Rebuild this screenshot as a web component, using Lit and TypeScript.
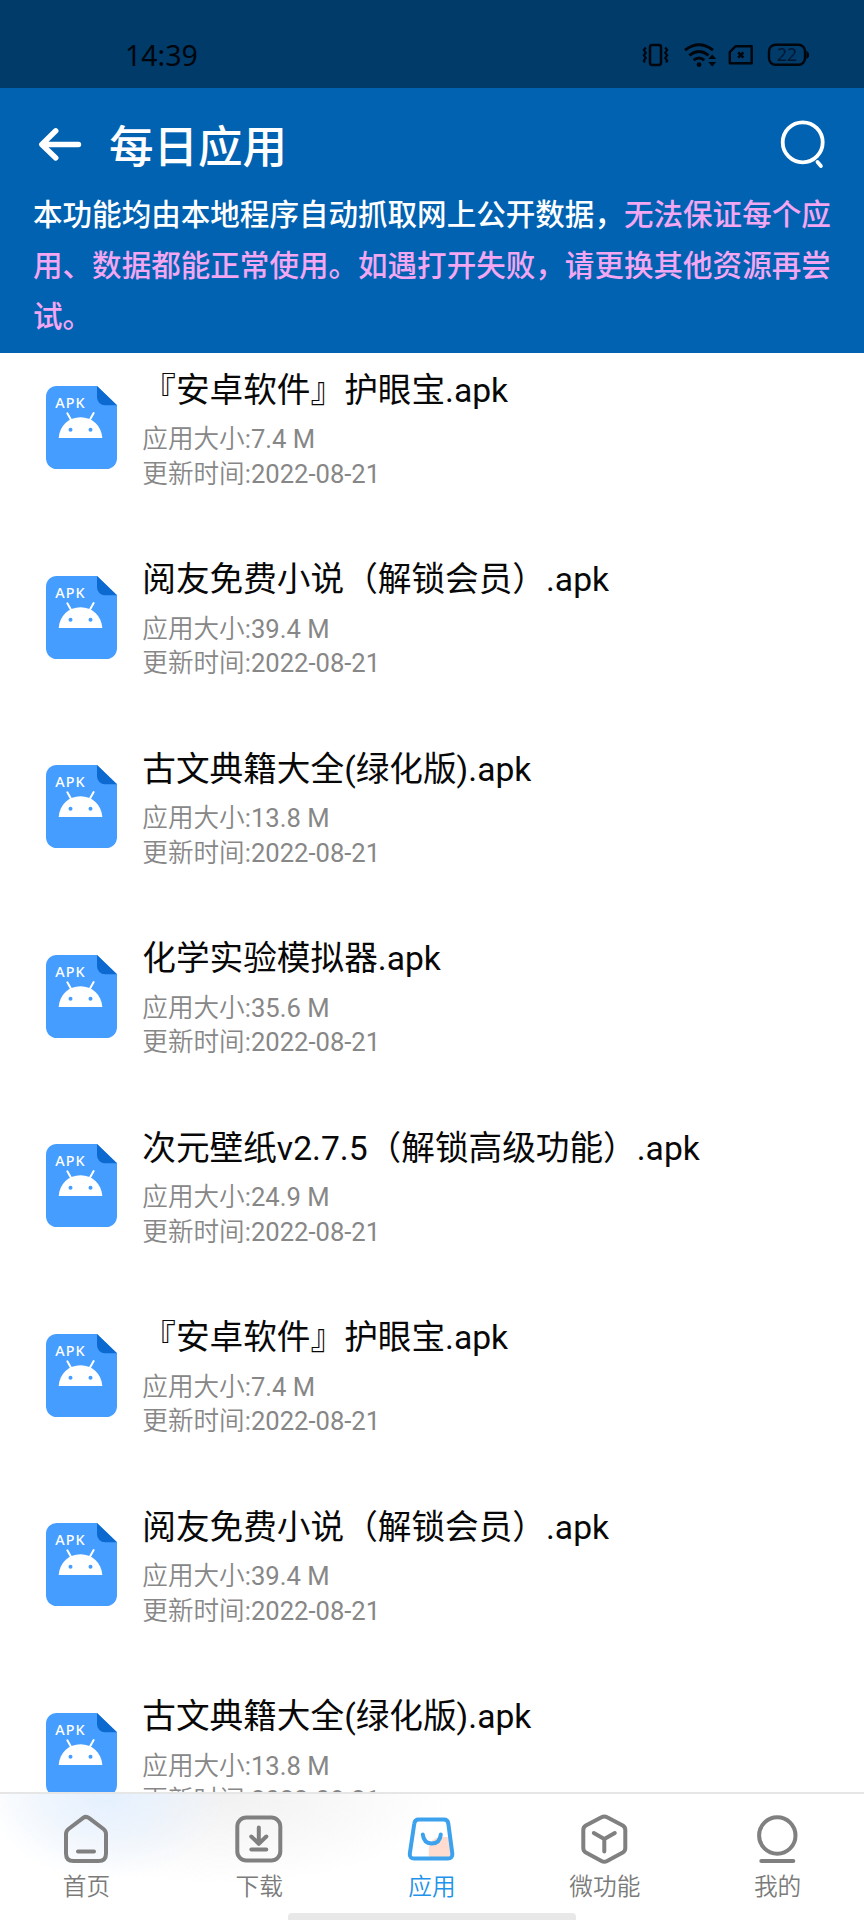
import { LitElement, html, css, svg } from "lit";
import { customElement, property } from "lit/decorators.js";

interface AppFile {
  name: string;
  size: string;
  date: string;
}

const CATALOG: AppFile[] = [
  { name: "『安卓软件』护眼宝.apk", size: "7.4 M", date: "2022-08-21" },
  { name: "阅友免费小说（解锁会员）.apk", size: "39.4 M", date: "2022-08-21" },
  { name: "古文典籍大全(绿化版).apk", size: "13.8 M", date: "2022-08-21" },
  { name: "化学实验模拟器.apk", size: "35.6 M", date: "2022-08-21" },
  { name: "次元壁纸v2.7.5（解锁高级功能）.apk", size: "24.9 M", date: "2022-08-21" },
];
const FILES = [...CATALOG, ...CATALOG.slice(0, 3)];

@customElement("status-bar")
class StatusBar extends LitElement {
  static styles = css`
    :host {
      display: flex;
      justify-content: space-between;
      align-items: center;
      height: 88px;
      box-sizing: border-box;
      padding: 22px 55px 0 125px;
      background: #003b69;
      color: #00060d;
      font-family: "Noto Sans", sans-serif;
    }
    .time {
      font-size: 28.5px;
      line-height: 40px;
    }
    .icons {
      display: block;
    }
    .level {
      font: 17.5px "Noto Sans", sans-serif;
      fill: #001833;
    }
  `;
  render() {
    return html`
      <span class="time">14:39</span>
      <svg class="icons" width="168" height="30" viewBox="0 0 168 30" fill="none" stroke="#00060d">
        <rect x="9" y="4.9" width="11" height="20" rx="2.2" stroke-width="2.5" />
        <path d="M4.8 7.5l-2 2.6 2 2.6-2 2.6 2 2.6-2 2.6 1 2M24.2 7.5l2 2.6-2 2.6 2 2.6-2 2.6 2 2.6-1 2" stroke-width="2.1" />
        <path d="M44 10.2Q58-.6 72 10.2M48.3 15.4Q58 7.4 67.6 15.4M52.6 20.2Q58 15.8 63.4 20.2" stroke-width="2.9" />
        <circle cx="58" cy="24.7" r="2.4" fill="#00060d" stroke="none" />
        <path d="M71.2 14.5l4 4.4h-8zM71.2 26.5l4-4.4h-8z" fill="#00060d" stroke="none" />
        <path d="M94.5 6.3h16.2v17H88.8V12z" stroke-width="2.4" stroke-linejoin="round" />
        <path d="M97.2 12.3l5.2 5.4M102.4 12.3l-5.2 5.400" stroke-width="2.6" />
        <rect x="128" y="4.8" width="36" height="20" rx="6.5" stroke-width="2.4" />
        <path d="M165.3 10.5q3 2 3 4.3t-3 4.3z" fill="#00060d" stroke="none" />
        <text class="level" x="136" y="21" stroke="none">22</text>
      </svg>
    `;
  }
}

@customElement("page-header")
class PageHeader extends LitElement {
  static styles = css`
    :host {
      display: block;
      height: 264.5px;
      box-sizing: border-box;
      background: #0062b1;
      color: #fff;
      font-family: "Noto Sans CJK SC", sans-serif;
    }
    .bar {
      display: flex;
      align-items: center;
      height: 99px;
      box-sizing: border-box;
      padding: 13px 34px 0 36px;
    }
    .bar svg {
      display: block;
      flex: none;
    }
    h1 {
      flex: 1;
      margin: 0 0 0 25px;
      font-size: 44.5px;
      line-height: 60px;
      font-weight: 500;
    }
    .notice {
      margin: 0;
      padding: 0 27px 0 33px;
      font-size: 29.55px;
      line-height: 51.2px;
      font-weight: 500;
    }
    .warn {
      color: #f3a6f2;
    }
  `;
  render() {
    return html`
      <div class="bar">
        <svg width="48" height="40" viewBox="0 0 48 40" fill="none" stroke="#fff" stroke-width="5.4" stroke-linecap="round" stroke-linejoin="round">
          <path d="M42.5 20.5H6M19.8 6.8L5.8 20.5l14 13.5" />
        </svg>
        <h1>每日应用</h1>
        <svg width="50" height="54" viewBox="0 0 50 54" fill="none" stroke="#fff" stroke-width="3.8">
          <circle cx="22.7" cy="25.3" r="20" />
          <path d="M37.5 45l3.4 4" stroke-linecap="round" />
        </svg>
      </div>
      <p class="notice">本功能均由本地程序自动抓取网上公开数据，<span class="warn">无法保证每个应用、数据都能正常使用。如遇打开失败，请更换其他资源再尝试。</span></p>
    `;
  }
}

@customElement("apk-row")
class ApkRow extends LitElement {
  @property({ attribute: false }) file!: AppFile;
  static styles = css`
    :host {
      display: flex;
      flex: none;
      gap: 25px;
      height: 189.55px;
      box-sizing: border-box;
      padding: 13px 24px 0 46.3px;
      font-family: Roboto, "Noto Sans CJK SC", sans-serif;
    }
    svg {
      display: block;
      flex: none;
      margin-top: 20.5px;
    }
    .mark {
      font: 500 43px "Noto Sans", sans-serif;
      letter-spacing: 3px;
      fill: #fff;
    }
    .name {
      font-size: 33.65px;
      line-height: 50px;
      color: #080808;
      white-space: nowrap;
    }
    .meta {
      margin-top: 6.5px;
      font-size: 25.6px;
      line-height: 34.6px;
      color: #878787;
    }
    .label {
      font-family: "Noto Sans CJK SC", sans-serif;
      font-weight: 350;
      line-height: 1;
    }
  `;
  render() {
    return html`
      <svg width="71" height="83" viewBox="0 0 213 249">
        <path d="M32 0H153L213 58V217a32 32 0 0 1-32 32H32a32 32 0 0 1-32-32V32A32 32 0 0 1 32 0z" fill="#459dff" />
        <path d="M153 0L213 58H177a24 24 0 0 1-24-24z" fill="#0c69d0" />
        <text class="mark" x="28" y="65">APK</text>
        <path d="M38 156C41 119 68 94 103.500 94S166 119 169 156z" fill="#fff" />
        <path d="M64 82L77 105M143 81L130 104" stroke="#fff" stroke-width="6" stroke-linecap="round" />
        <circle cx="73.500" cy="131" r="6" fill="#459dff" />
        <circle cx="133.500" cy="131" r="6" fill="#459dff" />
      </svg>
      <div>
        <div class="name">${this.file.name}</div>
        <div class="meta">
          <div><span class="label">应用大小</span>:${this.file.size}</div>
          <div><span class="label">更新时间</span>:${this.file.date}</div>
        </div>
      </div>
    `;
  }
}

const TABS = [
  {
    label: "首页",
    icon: svg`<path d="M21.2 4.900L6.500 16Q4 18 4 21V40.500Q4 48 11.500 48H36.500Q44 48 44 40.500V21Q44 18 41.500 16L26.800 4.900Q24 2.800 21.200 4.900zM16 38.500H32"/>`,
  },
  {
    label: "下载",
    icon: svg`<rect x="4" y="4.500" width="43" height="43" rx="9"/><path d="M25.500 14.500V30M18 23.500L25.500 30.800L33 23.500M18 36.500H33"/>`,
  },
  {
    label: "应用",
    active: true,
    icon: svg`<path d="M22.500 46V34.500A12 12 0 0 1 34.500 24H43.500L46 43L43 46z" fill="#ffdccf" stroke="none"/><path d="M12.500 6.500H37.500Q41.500 6.500 42 10.500L46 40.500Q46.500 45.500 41.500 45.500H8Q3 45.500 3.500 40.500L8 10.500Q8.500 6.500 12.500 6.500z"/><path d="M16.500 21.500Q17.500 30.500 25.500 30.500T34.500 21.500"/>`,
  },
  {
    label: "微功能",
    icon: svg`<path d="M22.200 4.200Q25 2.600 27.800 4.200L43.500 12.500Q46 14 46 17V35Q46 38 43.500 39.500L27.800 48Q25 49.600 22.200 48L6.500 39.500Q4 38 4 35V17Q4 14 6.500 12.500zM14.500 20L25 26L35.500 20M25 26V38.500"/>`,
  },
  {
    label: "我的",
    icon: svg`<circle cx="25" cy="22.500" r="18.200"/><path d="M9 48H41"/>`,
  },
];

@customElement("tab-bar")
class TabBar extends LitElement {
  static styles = css`
    :host {
      display: flex;
      flex-direction: column;
      flex: none;
      height: 128.3px;
      box-sizing: border-box;
      border-top: 2.5px solid #e6e6e6;
      background:
        radial-gradient(ellipse 120px 85px at 105px 0, #e4f0ff, #e4f0ff00),
        radial-gradient(ellipse 230px 90px at 220px 0, #f1f1f2, #f1f1f200),
        #fff;
      font-family: "Noto Sans CJK SC", sans-serif;
    }
    .tabs {
      display: grid;
      grid-template-columns: repeat(5, 1fr);
      height: 119.300px;
    }
    .tab {
      display: flex;
      flex-direction: column;
      align-items: center;
      gap: 3.500px;
      padding-top: 19px;
      color: #7b7b7b;
      font-size: 23.700px;
      line-height: 34px;
      font-weight: 350;
    }
    .tab.active {
      color: #1f92ea;
    }
    .icon {
      display: block;
      fill: none;
      stroke: #808080;
      stroke-width: 4;
      stroke-linecap: round;
      stroke-linejoin: round;
    }
    .active .icon {
      stroke: #3da2ee;
    }
    .handle {
      align-self: center;
      width: 288px;
      height: 6.500px;
      border-radius: 4px 4px 0 0;
      background: #e8e8e8;
    }
  `;
  render() {
    return html`
      <div class="tabs">
        ${TABS.map(
          (t, i) => html`<div class="tab ${t.active ? "active" : ""}">
            <svg class="icon" width="50" height="52" viewBox=${i === 0 ? "-1 0 50 52" : "0.7 0 50 52"}>${t.icon}</svg>
            <span>${t.label}</span>
          </div>`
        )}
      </div>
      <div class="handle"></div>
    `;
  }
}

@customElement("app-root")
class AppRoot extends LitElement {
  static styles = css`
    :host {
      display: flex;
      flex-direction: column;
      width: 864px;
      height: 1920px;
      overflow: hidden;
      background: #fff;
    }
    .list {
      display: flex;
      flex-direction: column;
      flex: 1;
      min-height: 0;
      overflow: hidden;
    }
  `;
  render() {
    return html`
      <status-bar></status-bar>
      <page-header></page-header>
      <div class="list">${FILES.map((f) => html`<apk-row .file=${f}></apk-row>`)}</div>
      <tab-bar></tab-bar>
    `;
  }
}
